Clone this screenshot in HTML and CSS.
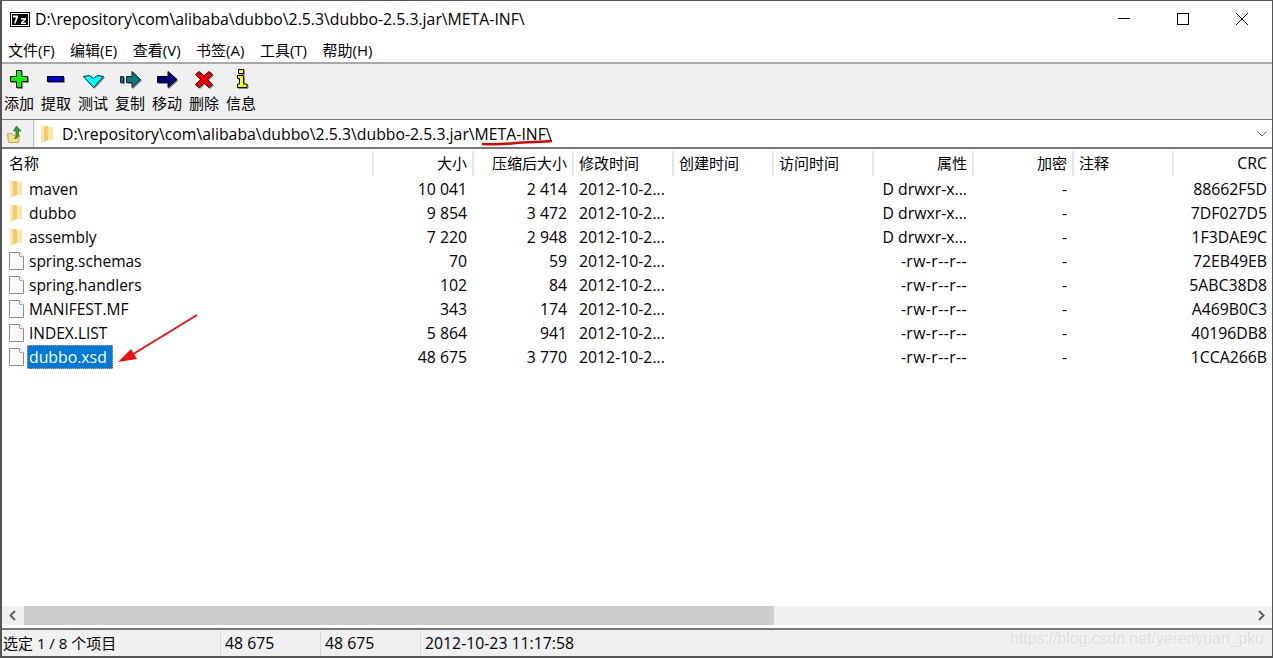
FILE: index.html
```html
<!doctype html>
<html lang="zh-CN">
<head>
	<meta charset="UTF-8">
	<title>7-Zip</title>
	<link rel="stylesheet" href="styles.css">
</head>
<body>
	<div class="window">
		<div class="titlebar">
			<svg class="app-icon" width="20" height="15" viewBox="0 0 20 15">
				<rect x="0.5" y="0.5" width="19" height="14" fill="#fff" stroke="#000"/>
				<rect x="2" y="2" width="16" height="11" fill="#000"/>
				<path d="M3 3.500h5v2l-2.500 6H4l2-6H3zM11 6h5v1.500l-3 3h3V12h-5v-1.500l3-3h-3z" fill="#fff"/>
			</svg>
			<span class="title">D:\repository\com\alibaba\dubbo\2.5.3\dubbo-2.5.3.jar\META-INF\</span>
			<div class="win-btns">
				<svg width="46" height="14" viewBox="0 0 46 14"><path d="M17 6.500h12" stroke="#000" fill="none"/></svg>
				<svg width="46" height="14" viewBox="0 0 46 14"><rect x="17.500" y="1.500" width="11" height="11" stroke="#000" fill="none"/></svg>
				<svg width="46" height="14" viewBox="0 0 46 14"><path d="M17 1l12 12M29 1L17 13" stroke="#000" fill="none"/></svg>
			</div>
		</div>

		<ul class="menu">
			<li>文件(F)</li>
			<li>编辑(E)</li>
			<li>查看(V)</li>
			<li>书签(A)</li>
			<li>工具(T)</li>
			<li>帮助(H)</li>
		</ul>

		<div class="toolbar">
			<div class="tool">
				<svg width="22" height="22" viewBox="0 0 22 22"><path d="M8.500 2.500h5v6h6v5h-6v6h-5v-6h-6v-5h6z" fill="#00ff00" stroke="#000"/></svg>
				<span>添加</span>
			</div>
			<div class="tool">
				<svg width="22" height="22" viewBox="0 0 22 22"><rect x="2.500" y="8.500" width="16" height="5" fill="#0000f0" stroke="#000"/></svg>
				<span>提取</span>
			</div>
			<div class="tool">
				<svg width="24" height="22" viewBox="0 0 24 22"><path d="M2.500 8.500l6-1 4 3 4-3 6 1-10 11z" fill="#00ffff" stroke="#123"/></svg>
				<span>测试</span>
			</div>
			<div class="tool">
				<svg width="24" height="22" viewBox="0 0 24 22"><path d="M2.500 8.500h3v6h-3zM8.500 8.500h5.500V3.500l8.500 8-8.500 8v-5H8.500z" fill="#0f7878" stroke="#123"/></svg>
				<span>复制</span>
			</div>
			<div class="tool">
				<svg width="24" height="22" viewBox="0 0 24 22"><path d="M2.500 8.500h10.500V3.500l9 8-9 8v-5H2.500z" fill="#000080" stroke="#001"/></svg>
				<span>移动</span>
			</div>
			<div class="tool">
				<svg width="22" height="22" viewBox="0 0 22 22"><path d="M6 3.500l5 4.500 5-4.500 3.500 3-5 5 5 5-3.500 3-5-4.500-5 4.500-3.500-3 5-5-5-5z" fill="#f00000" stroke="#300"/></svg>
				<span>删除</span>
			</div>
			<div class="tool">
				<svg width="22" height="22" viewBox="0 0 22 22"><path d="M8.500 1.500h5v4h-5zM7.500 7.500h6V16H17v3.500H7.500V16H9.500v-5.500h-2z" fill="#ffff00" stroke="#000"/></svg>
				<span>信息</span>
			</div>
		</div>

		<div class="addressbar">
			<div class="up-btn">
				<svg width="20" height="20" viewBox="0 0 20 20">
					<path d="M1.500 9.500h4l1 1.500h7l-1 7.500h-10z" fill="#f6e08e" stroke="#c8a648"/>
					<path d="M10.500 2l4.500 5h-2.500v4c0 2-1.500 3.500-4 3.500 1-1 1.500-2 1.500-4V7H7.500z" fill="#3c9a28" stroke="#1f6a18" stroke-width=".7"/>
				</svg>
			</div>
			<div class="address">
				<svg class="ico-dir"><use href="#dir"/></svg>
				<span class="path">D:\repository\com\alibaba\dubbo\2.5.3\dubbo-2.5.3.jar\META-INF\</span>
				<svg class="caret" width="10" height="6" viewBox="0 0 10 6"><path d="M.5 .5L5 5l4.500-4.500" stroke="#666" fill="none"/></svg>
			</div>
		</div>

		<div class="list">
			<div class="row head">
				<div class="cell">名称</div>
				<div class="cell r">大小</div>
				<div class="cell r">压缩后大小</div>
				<div class="cell">修改时间</div>
				<div class="cell">创建时间</div>
				<div class="cell">访问时间</div>
				<div class="cell r">属性</div>
				<div class="cell r">加密</div>
				<div class="cell">注释</div>
				<div class="cell r crc">CRC</div>
			</div>

			<div class="row">
				<div class="cell name"><svg class="ico"><use href="#dir"/></svg>maven</div>
				<div class="cell r">10 041</div><div class="cell r">2 414</div><div class="cell">2012-10-2...</div>
				<div class="cell"></div><div class="cell"></div><div class="cell r">D drwxr-x...</div>
				<div class="cell r">-</div><div class="cell"></div><div class="cell r">88662F5D</div>
			</div>
			<div class="row">
				<div class="cell name"><svg class="ico"><use href="#dir"/></svg>dubbo</div>
				<div class="cell r">9 854</div><div class="cell r">3 472</div><div class="cell">2012-10-2...</div>
				<div class="cell"></div><div class="cell"></div><div class="cell r">D drwxr-x...</div>
				<div class="cell r">-</div><div class="cell"></div><div class="cell r">7DF027D5</div>
			</div>
			<div class="row">
				<div class="cell name"><svg class="ico"><use href="#dir"/></svg>assembly</div>
				<div class="cell r">7 220</div><div class="cell r">2 948</div><div class="cell">2012-10-2...</div>
				<div class="cell"></div><div class="cell"></div><div class="cell r">D drwxr-x...</div>
				<div class="cell r">-</div><div class="cell"></div><div class="cell r">1F3DAE9C</div>
			</div>
			<div class="row">
				<div class="cell name"><svg class="ico"><use href="#doc"/></svg>spring.schemas</div>
				<div class="cell r">70</div><div class="cell r">59</div><div class="cell">2012-10-2...</div>
				<div class="cell"></div><div class="cell"></div><div class="cell r attr">-rw-r--r--</div>
				<div class="cell r">-</div><div class="cell"></div><div class="cell r">72EB49EB</div>
			</div>
			<div class="row">
				<div class="cell name"><svg class="ico"><use href="#doc"/></svg>spring.handlers</div>
				<div class="cell r">102</div><div class="cell r">84</div><div class="cell">2012-10-2...</div>
				<div class="cell"></div><div class="cell"></div><div class="cell r attr">-rw-r--r--</div>
				<div class="cell r">-</div><div class="cell"></div><div class="cell r">5ABC38D8</div>
			</div>
			<div class="row">
				<div class="cell name"><svg class="ico"><use href="#doc"/></svg>MANIFEST.MF</div>
				<div class="cell r">343</div><div class="cell r">174</div><div class="cell">2012-10-2...</div>
				<div class="cell"></div><div class="cell"></div><div class="cell r attr">-rw-r--r--</div>
				<div class="cell r">-</div><div class="cell"></div><div class="cell r">A469B0C3</div>
			</div>
			<div class="row">
				<div class="cell name"><svg class="ico"><use href="#doc"/></svg>INDEX.LIST</div>
				<div class="cell r">5 864</div><div class="cell r">941</div><div class="cell">2012-10-2...</div>
				<div class="cell"></div><div class="cell"></div><div class="cell r attr">-rw-r--r--</div>
				<div class="cell r">-</div><div class="cell"></div><div class="cell r">40196DB8</div>
			</div>
			<div class="row">
				<div class="cell name"><svg class="ico"><use href="#doc"/></svg><span class="selected">dubbo.xsd</span></div>
				<div class="cell r">48 675</div><div class="cell r">3 770</div><div class="cell">2012-10-2...</div>
				<div class="cell"></div><div class="cell"></div><div class="cell r attr">-rw-r--r--</div>
				<div class="cell r">-</div><div class="cell"></div><div class="cell r">1CCA266B</div>
			</div>
		</div>

		<div class="hscroll">
			<svg width="22" height="19" viewBox="0 0 22 19"><path d="M13 5L8.500 9.500 13 14" stroke="#606060" stroke-width="2" fill="none"/></svg>
			<div class="track"><div class="thumb"></div></div>
			<svg width="22" height="19" viewBox="0 0 22 19"><path d="M9 5l4.500 4.500L9 14" stroke="#606060" stroke-width="2" fill="none"/></svg>
		</div>

		<div class="status">
			<div class="st st1">选定 1 / 8 个项目</div>
			<div class="st st2">48 675</div>
			<div class="st st2">48 675</div>
			<div class="st">2012-10-23 11:17:58</div>
		</div>
	</div>

	<!-- 标注 -->
	<svg class="notes" width="1273" height="658" viewBox="0 0 1273 658">
		<path d="M482 144c14 1 24 0 34-1s26-1 36-2" stroke="#e00000" stroke-width="2.500" fill="none"/>
		<path d="M197 315L130 356" stroke="#f01010" stroke-width="2" fill="none"/>
		<path d="M118 362l13-13 6 10z" fill="#f01010"/>
	</svg>
	<div class="watermark">https://blog.csdn.net/yerenyuan_pku</div>

	<svg width="0" height="0" class="defs">
		<symbol id="dir" viewBox="0 0 15 18">
			<path d="M7 2h6v13H7z" fill="#fce6a4"/>
			<path d="M1 1h7v14l-7 3z" fill="#f2cc6c"/>
			<path d="M1 1h3v15.300L1 18z" fill="#fbe7ac"/>
		</symbol>
		<symbol id="doc" viewBox="0 0 15 18">
			<path d="M.5 .5h10l4 4v13H.5z" fill="#fafafa" stroke="#8c8c8c"/>
			<path d="M10.500 .5v4h4" fill="#fff" stroke="#aaa"/>
		</symbol>
	</svg>
</body>
</html>
```

FILE: styles.css
```css
html, body {
	margin: 0;
	height: 100%;
}

body {
	position: relative;
	overflow: hidden;
	background: #fff;
	color: #000;
	font: 400 15.8px/20px "Open Sans", "Noto Sans CJK SC", sans-serif;
}

ul {
	margin: 0;
	padding: 0;
	list-style: none;
}

.window {
	display: flex;
	flex-direction: column;
	box-sizing: border-box;
	height: 658px;
	border: 1px solid #555;
	border-left-width: 2px;
	border-bottom-width: 2px;
}

.titlebar {
	display: flex;
	align-items: center;
	box-sizing: border-box;
	height: 37px;
	padding: 0 0 1px 8px;
}

.app-icon {
	flex: none;
}

.title {
	margin-left: 5px;
}

.win-btns {
	display: flex;
	gap: 13px;
	margin-left: auto;
	margin-right: 7px;
}

.menu {
	display: flex;
	gap: 15.500px;
	height: 26px;
	padding-left: 6px;
	align-items: center;
	border-bottom: 2px solid #a8a8a8;
	box-sizing: border-box;
	font-size: 15px;
}

.toolbar {
	display: flex;
	gap: 7px;
	height: 56px;
	box-sizing: border-box;
	padding-left: 2px;
	background: #f0f0f0;
	border-bottom: 1px solid #777;
	font-size: 15px;
}

.tool {
	display: flex;
	flex-direction: column;
	align-items: center;
	width: 30px;
	padding-top: 4px;
}

.tool svg {
	flex: none;
	filter: drop-shadow(1px 1px 0 #8a8a8a);
}

.tool span {
	margin-top: 3px;
	white-space: nowrap;
}

.addressbar {
	display: flex;
	height: 29px;
	box-sizing: border-box;
	background: #f0f0f0;
	border-bottom: 2px solid #777;
}

.up-btn {
	display: flex;
	align-items: center;
	box-sizing: border-box;
	width: 32px;
	padding-left: 4px;
	border-right: 1px solid #c4c4c4;
}

.address {
	flex: 1;
	display: flex;
	align-items: center;
	background: #fff;
	padding-left: 5px;
	margin-left: 1px;
}

.ico-dir {
	flex: none;
	width: 15px;
	height: 18px;
}

.path {
	margin-left: 7px;
}

.caret {
	margin-left: auto;
	margin-right: 5px;
}

.list {
	flex: 1;
	padding-top: 2px;
	min-width: 0;
	overflow: hidden;
}

.row {
	display: grid;
	grid-template-columns: 372px repeat(9, 100px);
	height: 24px;
	align-items: center;
	white-space: nowrap;
}

.row.head {
	height: 25px;
	margin-bottom: 1px;
	font-size: 15px;
}

.cell {
	padding: 0 7px 0 5px;
	overflow: hidden;
}

.cell:first-child {
	padding-left: 7px;
}

.cell.r {
	text-align: right;
}

.cell.attr {
	letter-spacing: .4px;
}

.head .cell {
	height: 25px;
	line-height: 25px;
	padding-right: 5px;
	border-right: 2px solid #e6e6e6;
	box-sizing: border-box;
}

.head .crc {
	padding-right: 7px;
	border-right: 0;
	font-size: 15.800px;
}

.name {
	display: flex;
	align-items: center;
	font-size: 15.500px;
}

.ico {
	flex: none;
	width: 15px;
	height: 18px;
	margin-right: 5px;
}

.selected {
	margin-left: -2px;
	padding: 0 6px 0 2px;
	line-height: 24px;
	background: #0078d7;
	color: #fff;
	font-size: 15.800px;
	outline: 1px dotted #d9a070;
	outline-offset: -1px;
}

.hscroll {
	display: flex;
	height: 19px;
	background: #f0f0f0;
	border-bottom: 3px solid #fff;
	box-shadow: 0 3px 0 -2px #777;
}

.track {
	flex: 1;
}

.thumb {
	width: 750px;
	height: 19px;
	background: #cdcdcd;
}

.status {
	display: flex;
	height: 28px;
	background: #f0f0f0;
	border-top: 2px solid #777;
	box-sizing: border-box;
	padding-top: 1px;
}

.st {
	padding-left: 4px;
	line-height: 24px;
	border-right: 1px solid #d8d8d8;
	box-sizing: border-box;
}

.st:last-child {
	border-right: 0;
}

.st1 {
	width: 219px;
	padding-left: 1px;
	font-size: 15px;
}

.st2 {
	width: 100px;
}

.notes {
	position: absolute;
	left: 0;
	top: 0;
	pointer-events: none;
}

.watermark {
	position: absolute;
	right: 9px;
	bottom: 9px;
	color: #dedede;
	font: 15.800px/20px "Liberation Sans", sans-serif;
	text-shadow: 1px 1px 0 #f7f7f7;
}

.defs {
	position: absolute;
}
```
